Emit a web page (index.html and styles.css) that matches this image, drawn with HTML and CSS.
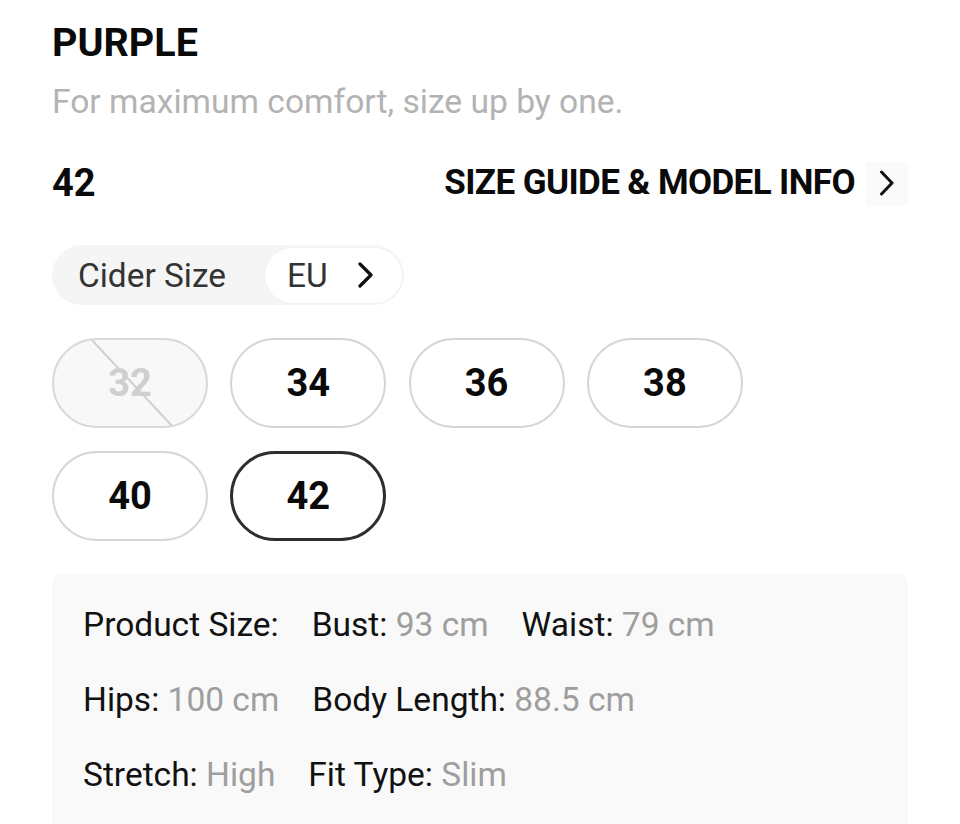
FILE: index.html
```html
<!DOCTYPE html>
<html lang="en">
<head>
<meta charset="utf-8">
<title>Size selector</title>
<link rel="stylesheet" href="styles.css">
</head>
<body>
<main class="panel">
  <h1 class="title">PURPLE</h1>
  <p class="subtitle">For maximum comfort, size up by one.</p>

  <div class="size-head">
    <span class="current">42</span>
    <a class="guide" href="#">
      <span class="guide-text">SIZE GUIDE &amp; MODEL INFO</span>
      <span class="guide-arrow">
        <svg width="16" height="26" viewBox="0 0 16 26"><polyline points="2.5,2 13,13 2.5,24" fill="none" stroke="#111" stroke-width="3" stroke-linecap="round" stroke-linejoin="round"/></svg>
      </span>
    </a>
  </div>

  <div class="unit-switch">
    <span class="unit-label">Cider Size</span>
    <span class="unit-value">EU
      <svg width="16" height="26" viewBox="0 0 16 26"><polyline points="2,2 13,13 2,24" fill="none" stroke="#111" stroke-width="3.2" stroke-linecap="round" stroke-linejoin="round"/></svg>
    </span>
  </div>

  <div class="sizes">
    <button class="size size-disabled">32
      <svg class="strike" viewBox="0 0 156 90" preserveAspectRatio="none"><line x1="38" y1="0" x2="122" y2="90" stroke="#cfcfcf" stroke-width="2"/></svg>
    </button>
    <button class="size">34</button>
    <button class="size">36</button>
    <button class="size">38</button>
    <button class="size">40</button>
    <button class="size size-selected">42</button>
  </div>

  <section class="specs">
    <div class="spec-row">
      <span class="spec-key">Product Size:</span>
      <span class="spec"><span class="spec-key">Bust:</span> <span class="spec-val">93 cm</span></span>
      <span class="spec"><span class="spec-key">Waist:</span> <span class="spec-val">79 cm</span></span>
    </div>
    <div class="spec-row">
      <span class="spec"><span class="spec-key">Hips:</span> <span class="spec-val">100 cm</span></span>
      <span class="spec"><span class="spec-key">Body Length:</span> <span class="spec-val">88.5 cm</span></span>
    </div>
    <div class="spec-row">
      <span class="spec"><span class="spec-key">Stretch:</span> <span class="spec-val">High</span></span>
      <span class="spec"><span class="spec-key">Fit Type:</span> <span class="spec-val">Slim</span></span>
    </div>
  </section>
</main>
</body>
</html>
```

FILE: styles.css
```css
* { box-sizing: border-box; }

html, body {
  margin: 0;
  background: #ffffff;
}

body {
  font-family: Roboto, "Noto Sans", Arial, sans-serif;
  color: #111;
  overflow: hidden;
}

.panel {
  padding: 19px 52px 0 52px;
}

.title {
  margin: 0;
  font-size: 39.5px;
  line-height: 48px;
  font-weight: 700;
  color: #0a0a0a;
}

.subtitle {
  margin: 13px 0 0 0;
  font-size: 33.6px;
  line-height: 44px;
  color: #b3b3b3;
}

.size-head {
  margin-top: 37px;
  height: 44px;
  display: flex;
  align-items: center;
  justify-content: space-between;
}

.current {
  font-size: 38px;
  line-height: 44px;
  font-weight: 700;
  color: #0a0a0a;
}

.guide {
  display: flex;
  align-items: center;
  gap: 11px;
  text-decoration: none;
  color: #0a0a0a;
}

.guide-text {
  font-size: 35px;
  letter-spacing: -0.6px;
  line-height: 44px;
  font-weight: 700;
}

.guide-arrow {
  width: 42px;
  height: 43px;
  background: #fafafa;
  display: flex;
  align-items: center;
  justify-content: center;
}

.unit-switch {
  margin-top: 40px;
  width: 352px;
  height: 60px;
  border-radius: 30px;
  background: #f5f5f5;
  display: flex;
  align-items: center;
  justify-content: space-between;
  padding: 0 2px 0 26px;
}

.unit-label {
  font-size: 33.4px;
  color: #333;
}

.unit-value {
  width: 137px;
  height: 55px;
  border-radius: 28px;
  background: #ffffff;
  box-shadow: 0 0 2px rgba(0, 0, 0, 0.06);
  display: flex;
  align-items: center;
  justify-content: space-between;
  padding: 0 28px 0 22px;
  font-size: 33.4px;
  color: #333;
}

.sizes {
  margin-top: 33px;
  display: grid;
  grid-template-columns: repeat(4, 156px);
  column-gap: 22.3px;
  row-gap: 23px;
}

.size {
  position: relative;
  height: 90px;
  border: 2px solid #d6d6d6;
  border-radius: 45px;
  background: #ffffff;
  font-family: Roboto, "Noto Sans", Arial, sans-serif;
  font-size: 38px;
  font-weight: 700;
  color: #0a0a0a;
  padding: 0;
  display: flex;
  align-items: center;
  justify-content: center;
  overflow: hidden;
}

.size-disabled {
  background: #f8f8f8;
  color: #cfcfcf;
  border-color: #d9d9d9;
}

.strike {
  position: absolute;
  left: -2px;
  top: -2px;
  width: 156px;
  height: 90px;
}

.size-selected {
  border: 3px solid #2e2e2e;
}

.specs {
  margin-top: 33px;
  background: #f9f9f9;
  border-radius: 10px;
  padding: 13px 31px 40px 31px;
}

.spec-row {
  display: flex;
  gap: 33px;
  font-size: 33.5px;
  line-height: 75px;
  white-space: nowrap;
}

.spec-key {
  color: #111;
}

.spec-val {
  color: #9e9e9e;
}
```
